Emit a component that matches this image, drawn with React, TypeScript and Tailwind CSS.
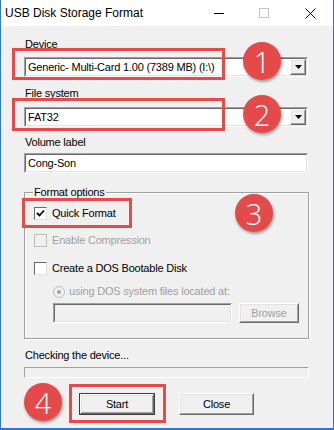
import { FC, ReactNode } from "react";

const font = { fontFamily: '"Liberation Sans", Arial, sans-serif' };

const Sunken: FC<{ className?: string; children?: ReactNode; disabled?: boolean }> = ({ className = "", children, disabled }) => (
  <div className={`border border-t-[#a0a0a0] border-l-[#a0a0a0] border-r-white border-b-white ${className}`}>
    <div
      className={`h-full w-full border border-t-[#696969] border-l-[#696969] border-r-[#e3e3e3] border-b-[#e3e3e3] ${
        disabled ? "bg-[#f0f0f0]" : "bg-white"
      } flex items-center`}
    >
      {children}
    </div>
  </div>
);

const Raised: FC<{ className?: string; children?: ReactNode; isDefault?: boolean }> = ({ className = "", children, isDefault }) => (
  <div className={`${isDefault ? "border border-[#3c3c3c]" : ""} ${className}`}>
    <div className="h-full w-full border border-t-white border-l-white border-r-[#696969] border-b-[#696969]">
      <div className="h-full w-full border border-t-[#e3e3e3] border-l-[#e3e3e3] border-r-[#a0a0a0] border-b-[#a0a0a0] bg-[#f0f0f0] flex items-center justify-center">
        {children}
      </div>
    </div>
  </div>
);

const Combo: FC<{ value: string }> = ({ value }) => (
  <Sunken className="h-[20px] w-[284px]">
    <span className="pl-[2px] flex-1 leading-[13px]">{value}</span>
    <Raised className="h-full w-[16px]">
      <svg width="7" height="4" viewBox="0 0 7 4">
        <path d="M0 0h7L3.5 4z" fill="#000" />
      </svg>
    </Raised>
  </Sunken>
);

const Check: FC<{ checked?: boolean; disabled?: boolean }> = ({ checked, disabled }) => (
  <div
    className={`h-[13px] w-[13px] border ${
      disabled ? "border-[#bcbcbc] bg-[#f0f0f0]" : "border-t-[#696969] border-l-[#696969] border-r-[#e3e3e3] border-b-[#e3e3e3] bg-white"
    } flex items-center justify-center`}
  >
    {checked && (
      <svg width="9" height="9" viewBox="0 0 9 9">
        <path d="M1 4l2.5 2.5L8 1.5" stroke="#000" strokeWidth="1.8" fill="none" />
      </svg>
    )}
  </div>
);

const Badge: FC<{ n: string; className: string }> = ({ n, className }) => (
  <div
    className={`absolute h-[38px] w-[38px] rounded-full bg-[#e54a4a] text-white flex items-center justify-center text-[29px] leading-none shadow-[1px_2px_3px_rgba(0,0,0,0.35)] ${className}`}
    style={{ fontFamily: '"Open Sans", "Noto Sans", sans-serif', fontWeight: 300 }}
  >
    {n}
  </div>
);

const App: FC = () => {
  return (
    <div className="relative w-[334px] h-[430px] bg-[#2b79d7] px-[1px] pb-[2px] text-[11px] text-black" style={font}>
      <div className="flex flex-col h-full w-full">
        <div className="h-[26px] bg-white flex items-center shrink-0">
          <span className="pl-[4px] text-[12px] text-[#000]">USB Disk Storage Format</span>
          <div className="ml-auto flex items-center">
            <svg width="10" height="10" viewBox="0 0 10 10" className="mr-[35px]">
              <path d="M0 5.5h10" stroke="#000" strokeWidth="1" />
            </svg>
            <svg width="10" height="10" viewBox="0 0 10 10" className="mr-[36px]">
              <rect x="0.5" y="0.5" width="9" height="9" stroke="#c4c4c4" fill="none" />
            </svg>
            <svg width="11" height="11" viewBox="0 0 11 11" className="mr-[17px]">
              <path d="M0.5 0.5l10 10M10.5 0.5l-10 10" stroke="#000" strokeWidth="1" />
            </svg>
          </div>
        </div>

        <div className="flex-1 bg-[#f0f0f0] pl-[23px] pt-[12px] flex flex-col tracking-[-0.2px]">
          <div className="h-[13px] leading-[13px] pl-[1px]">Device</div>
          <div className="mt-[6px]">
            <Combo value="Generic- Multi-Card 1.00 (7389 MB) (I:\)" />
          </div>

          <div className="mt-[10px] h-[13px] leading-[13px] pl-[1px]">File system</div>
          <div className="mt-[7px]">
            <Combo value="FAT32" />
          </div>

          <div className="mt-[9px] h-[13px] leading-[13px] pl-[1px]">Volume label</div>
          <Sunken className="mt-[4px] h-[20px] w-[284px]">
            <span className="pl-[2px] leading-[13px]">Cong-Son</span>
          </Sunken>

          <div className="relative mt-[19px] w-[285px] h-[147px] border border-[#a0a0a0] shadow-[inset_1px_1px_0_#fff,1px_1px_0_#fff] pl-[9px] pt-[14px]">
            <span className="absolute -top-[7px] left-[8px] px-[1px] bg-[#f0f0f0] leading-[13px]">Format options</span>

            <div className="flex items-center h-[13px] gap-[5px]">
              <Check checked />
              <span className="leading-[13px]">Quick Format</span>
            </div>
            <div className="flex items-center h-[13px] gap-[5px] mt-[14px] text-[#a0a0a0]">
              <Check disabled />
              <span className="leading-[13px]">Enable Compression</span>
            </div>
            <div className="flex items-center h-[13px] gap-[5px] mt-[15px]">
              <Check />
              <span className="leading-[13px]">Create a DOS Bootable Disk</span>
            </div>
            <div className="flex items-center h-[13px] gap-[4px] mt-[10px] pl-[19px] text-[#a0a0a0]">
              <svg width="12" height="12" viewBox="0 0 12 12">
                <circle cx="6" cy="6" r="5.5" fill="#f0f0f0" stroke="#bcbcbc" />
                <circle cx="6" cy="6" r="2" fill="#a0a0a0" />
              </svg>
              <span className="leading-[13px]">using DOS system files located at:</span>
            </div>
            <div className="flex mt-[5px] pl-[19px] gap-[7px]">
              <Sunken className="h-[20px] w-[179px]" disabled />
              <Raised className="h-[20px] w-[60px]">
                <span className="text-[#a0a0a0]">Browse</span>
              </Raised>
            </div>
          </div>

          <div className="mt-[10px] h-[13px] leading-[13px] pl-[1px]">Checking the device...</div>
          <div className="mt-[5px] h-[11px] w-[285px] border border-t-[#a0a0a0] border-l-[#a0a0a0] border-r-white border-b-white bg-[#f0f0f0]" />

          <div className="flex mt-[15px] pl-[55px] gap-[24px]">
            <Raised className="h-[22px] w-[76px]" isDefault>
              <span>Start</span>
            </Raised>
            <Raised className="h-[22px] w-[75px]">
              <span>Close</span>
            </Raised>
          </div>
        </div>
      </div>

      <div className="absolute left-[12px] top-[48px] w-[213px] h-[32px] border-[3px] border-[#e84a4a]" />
      <div className="absolute left-[12px] top-[98px] w-[213px] h-[33px] border-[3px] border-[#e84a4a]" />
      <div className="absolute left-[22px] top-[198px] w-[110px] h-[30px] border-[3px] border-[#e84a4a]" />
      <div className="absolute left-[69px] top-[384px] w-[97px] h-[39px] border-[3px] border-[#e84a4a]" />

      <Badge n="1" className="left-[243px] top-[42px]" />
      <Badge n="2" className="left-[243px] top-[95px]" />
      <Badge n="3" className="left-[235px] top-[194px]" />
      <Badge n="4" className="left-[24px] top-[383px]" />
    </div>
  );
};

export default App;
